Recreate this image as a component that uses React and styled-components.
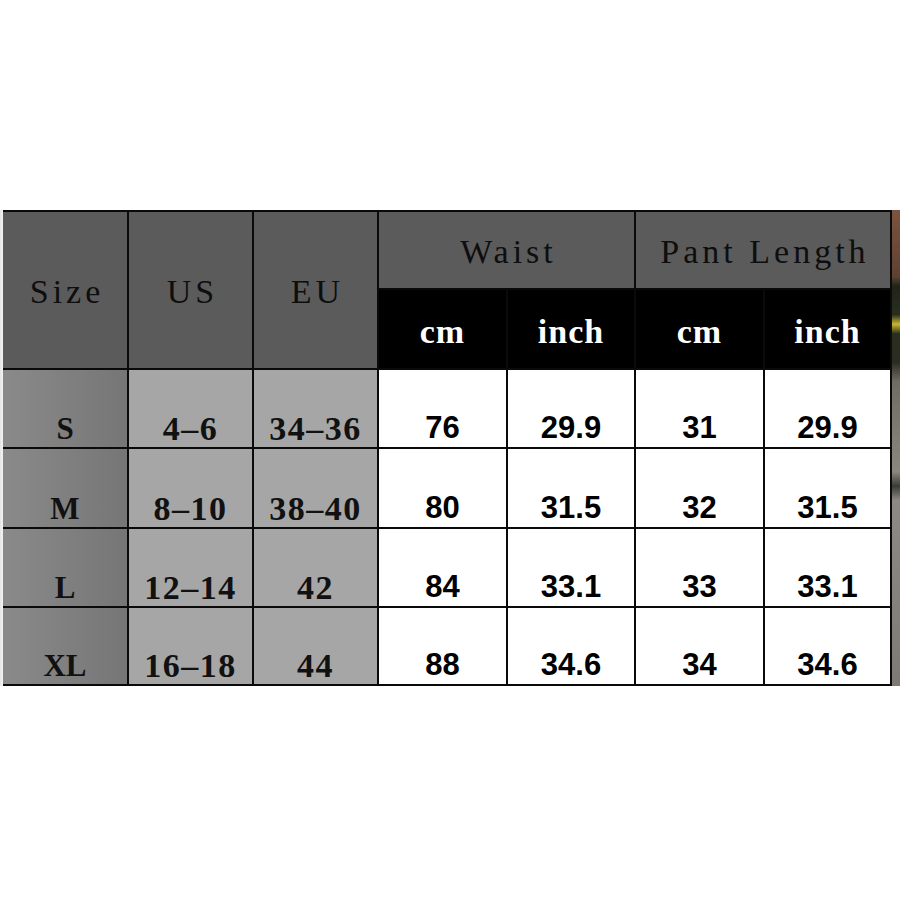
import React from 'react';
import styled, { createGlobalStyle } from 'styled-components';

const GlobalStyle = createGlobalStyle`
  html, body {
    margin: 0;
    padding: 0;
    background: #ffffff;
  }
`;

const Page = styled.div`
  width: 900px;
  height: 900px;
  padding-top: 210px;
  box-sizing: border-box;
  display: flex;
  align-items: flex-start;
`;

const Edge = styled.div`
  width: 3px;
  height: 476px;
  background: linear-gradient(to right, #e6e6e6, #f4f4f4);
`;

const Table = styled.div`
  display: grid;
  grid-template-columns: 124px 123px 123px 127px 126px 127px 125px;
  grid-template-rows: 76px 78px 77px 78px 77px 76px;
  gap: 2px;
  padding: 2px 2px 2px 0;
  background: #0a0a0a;
`;

const Photo = styled.div`
  width: 8px;
  height: 476px;
  background: linear-gradient(
    to bottom,
    #7a5440 0%,
    #5e4132 14%,
    #1f2418 16%,
    #2b2e1e 22%,
    #c9b830 24%,
    #2b2e1e 26%,
    #2a2c1f 32%,
    #6f6c62 36%,
    #8a877e 55%,
    #3a3a36 58%,
    #8c8a82 61%,
    #7c7a72 100%
  );
`;

const serif = `'Liberation Serif', 'Times New Roman', serif`;

const HeadCell = styled.div`
  grid-row: ${p => (p.$span ? 'span 2' : 'auto')};
  grid-column: ${p => (p.$cols ? `span ${p.$cols}` : 'auto')};
  background: #5b5b5b;
  color: #0e0e0e;
  display: flex;
  align-items: center;
  justify-content: center;
  font-family: ${serif};
  font-size: 34px;
  letter-spacing: 4px;
  text-indent: 4px;
  line-height: 1;
  padding-top: 4px;
  box-sizing: border-box;
`;

const UnitCell = styled.div`
  background: #000000;
  color: #ffffff;
  display: flex;
  align-items: center;
  justify-content: center;
  font-family: ${serif};
  font-weight: bold;
  font-size: 34px;
  letter-spacing: 1px;
  line-height: 1;
  padding-top: 6px;
  box-sizing: border-box;
`;

const LabelCell = styled.div`
  background: ${p =>
    p.$dark
      ? 'linear-gradient(to right, #8a8a8a, #767676)'
      : '#a6a6a6'};
  color: #111111;
  display: flex;
  align-items: flex-end;
  justify-content: center;
  font-family: ${serif};
  font-weight: bold;
  font-size: ${p => (p.$dark ? '31px' : '34px')};
  letter-spacing: ${p => (p.$dark ? '0' : '1.5px')};
  line-height: 34px;
  padding-bottom: 1px;
  box-sizing: border-box;
`;

const ValueCell = styled.div`
  background: #ffffff;
  color: #000000;
  display: flex;
  align-items: flex-end;
  justify-content: center;
  font-family: 'Liberation Sans', Arial, sans-serif;
  font-weight: bold;
  font-size: 31px;
  line-height: 31px;
  padding-bottom: 4px;
  box-sizing: border-box;
`;

const rows = [
  ['S', '4-6', '34-36', '76', '29.9', '31', '29.9'],
  ['M', '8-10', '38-40', '80', '31.5', '32', '31.5'],
  ['L', '12-14', '42', '84', '33.1', '33', '33.1'],
  ['XL', '16-18', '44', '88', '34.6', '34', '34.6'],
];

export default function App() {
  return (
    <>
      <GlobalStyle />
      <Page>
        <Edge />
        <Table>
          <HeadCell $span>Size</HeadCell>
          <HeadCell $span>US</HeadCell>
          <HeadCell $span>EU</HeadCell>
          <HeadCell $cols={2}>Waist</HeadCell>
          <HeadCell $cols={2}>Pant Length</HeadCell>
          <UnitCell>cm</UnitCell>
          <UnitCell>inch</UnitCell>
          <UnitCell>cm</UnitCell>
          <UnitCell>inch</UnitCell>
          {rows.map(r => (
            <React.Fragment key={r[0]}>
              <LabelCell $dark>{r[0]}</LabelCell>
              <LabelCell>{r[1].replace('-', '\u2013')}</LabelCell>
              <LabelCell>{r[2].replace('-', '\u2013')}</LabelCell>
              {r.slice(3).map((v, i) => (
                <ValueCell key={i}>{v}</ValueCell>
              ))}
            </React.Fragment>
          ))}
        </Table>
        <Photo />
      </Page>
    </>
  );
}
